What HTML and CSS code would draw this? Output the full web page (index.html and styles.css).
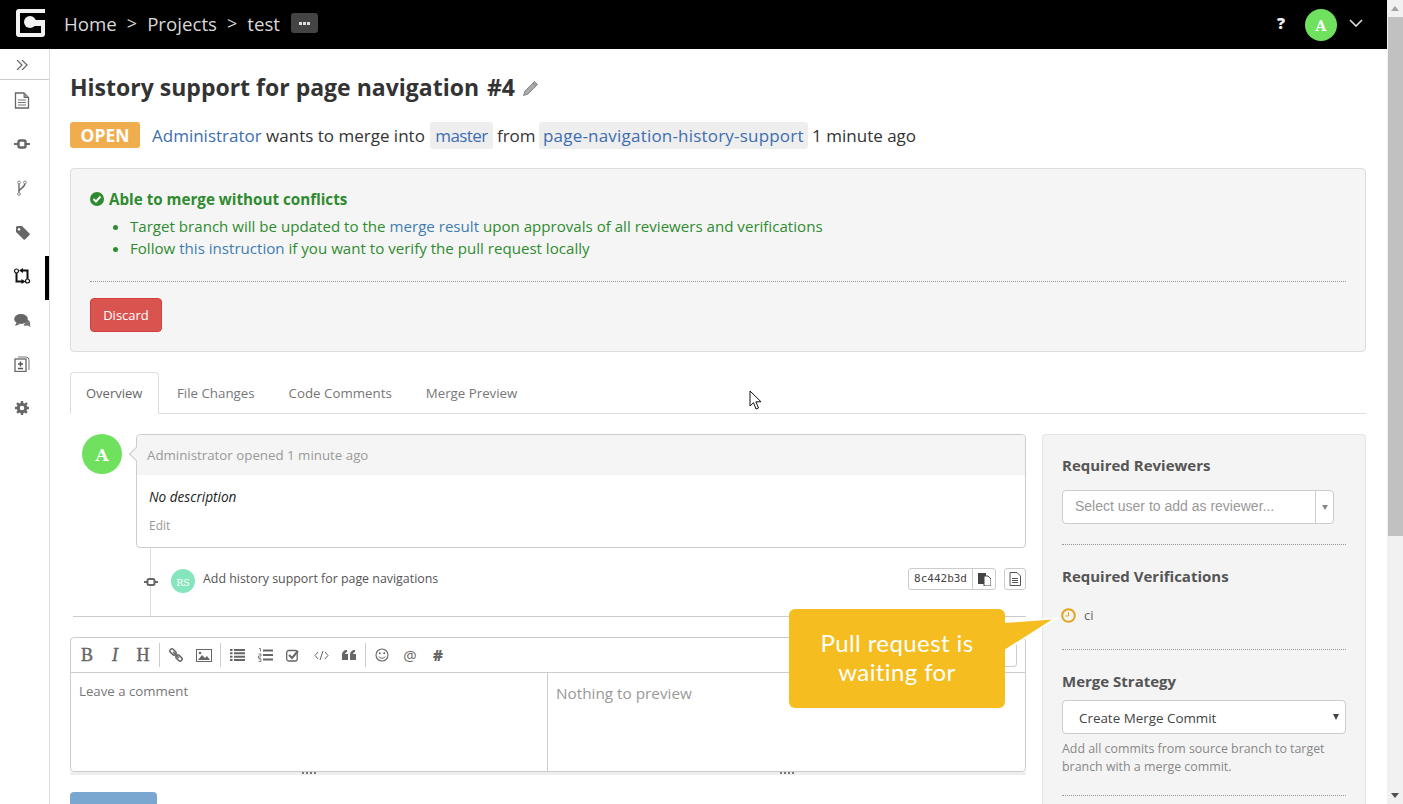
FILE: index.html
```html
<!DOCTYPE html>
<html lang="en">
<head>
<meta charset="utf-8">
<title>History support for page navigation #4</title>
<link rel="stylesheet" href="styles.css">
</head>
<body>
<div class="viewport">
  <div class="app">
    <header class="topbar">
      <svg class="logo" width="30" height="30" viewBox="0 0 30 30"><path d="M4 1H30V5H5V25H26V18H17V12H30V26a3 3 0 0 1-3 3H4a3 3 0 0 1-3-3V4a3 3 0 0 1 3-3z" fill="#f2f2f2"/><circle cx="15" cy="14" r="6" fill="#f2f2f2"/></svg>
      <nav class="crumbs"><span>Home</span><span class="sep">&gt;</span><span>Projects</span><span class="sep">&gt;</span><span>test</span><span class="more"><i></i><i></i><i></i></span></nav>
      <span class="help">?</span>
      <span class="avatar small">A</span>
      <svg class="chev" width="14" height="8" viewBox="0 0 14 8"><path d="M1 1l6 6 6-6" fill="none" stroke="#ddd" stroke-width="1.6"/></svg>
    </header>
    <div class="body">
      <aside class="sidebar">
        <div class="collapse"><svg width="12" height="10" viewBox="0 0 12 10"><path d="M1 0l5 5-5 5M6 0l5 5-5 5" fill="none" stroke="#666" stroke-width="1.2"/></svg></div>
        <ul class="menu">
          <li><svg width="16" height="17" viewBox="0 0 16 17"><path d="M1.500 1h8.500l4.500 4.500V16H1.500z" fill="none" stroke="#666" stroke-width="1.300"/><path d="M10 1v4.500h4.500" fill="#999" stroke="#666"/><path d="M4 8h8M4 10.500h8M4 13h8" stroke="#777" stroke-width="1.200"/></svg></li>
          <li><svg width="16" height="10" viewBox="0 0 16 10"><path d="M0 5h4M12 5h4" stroke="#666" stroke-width="2"/><rect x="4.500" y="1.500" width="7" height="7" rx="1.500" fill="#fff" stroke="#666" stroke-width="2.400"/></svg></li>
          <li><svg width="14" height="16" viewBox="0 0 14 16"><path d="M4 14V3M4 11c1-3 6-3 6-8" fill="none" stroke="#666" stroke-width="1.400"/><circle cx="4" cy="2.500" r="1.400" fill="#fff" stroke="#888"/><circle cx="10" cy="2.500" r="1.400" fill="#fff" stroke="#888"/><circle cx="4" cy="14" r="1.400" fill="#fff" stroke="#888"/></svg></li>
          <li><svg width="15" height="15" viewBox="0 0 15 15"><path d="M1 2.500Q1 1 2.500 1H7l7.500 7.500a1 1 0 0 1 0 1.400L10 14.500a1 1 0 0 1-1.400 0L1 7zM4 3a1.300 1.300 0 1 0 .01 0z" fill="#666" fill-rule="evenodd"/></svg></li>
          <li class="active"><svg width="16" height="16" viewBox="0 0 16 16"><path d="M2.500 5v8.500h6M13.500 11V2.500H8" fill="none" stroke="#111" stroke-width="2"/><path d="M9 0L5 2.500 9 5zM7.500 11l4 2.500-4 2.500z" fill="#111"/><circle cx="2.500" cy="3" r="2" fill="#fff" stroke="#111" stroke-width="1.200"/><circle cx="13.500" cy="13" r="2" fill="#fff" stroke="#111" stroke-width="1.200"/></svg></li>
          <li><svg width="17" height="15" viewBox="0 0 17 15"><path d="M13.500 6.500c2 1 3 3 2.500 4.500l.5 3-3-1.500c-1.500.5-3 .3-4-.3" fill="#777"/><ellipse cx="7" cy="6" rx="6.800" ry="5" fill="#666"/><path d="M2.500 9.500L1 13l5-2z" fill="#666"/></svg></li>
          <li><svg width="16" height="16" viewBox="0 0 16 16"><path d="M4 1h8q3 0 3 3v10" fill="none" stroke="#777"/><rect x="1" y="3" width="11" height="12.500" fill="none" stroke="#666" stroke-width="1.300"/><path d="M6.500 5.500v5M4 8h5M4 12.500h5" stroke="#555" stroke-width="1.500"/></svg></li>
          <li><svg width="16" height="16" viewBox="0 0 16 16"><circle cx="8" cy="8" r="3.800" fill="none" stroke="#666" stroke-width="3"/><path d="M8 1v14M1 8h14M3 3l10 10M13 3L3 13" stroke="#666" stroke-width="2.400" stroke-dasharray="2.600 8.800"/></svg></li>
        </ul>
      </aside>
      <main class="main">
        <h1 class="title">History support for page navigation<span>#4</span><svg class="pencil" width="17" height="17" viewBox="0 0 17 17"><path d="M12.500 1.500l3 3L6 14l-4.500 1.500L3 11zM11 3l3 3" fill="#aaa" stroke="#888" stroke-width="1"/></svg></h1>
        <div class="status">
          <span class="badge">OPEN</span>
          <span class="status-text"><a>Administrator</a> wants to merge into <a class="ref master">master</a> from <a class="ref branch">page-navigation-history-support</a> 1 minute ago</span>
        </div>
        <section class="merge">
          <div class="ok"><svg width="14" height="14" viewBox="0 0 14 14"><circle cx="7" cy="7" r="7" fill="#2f8b2f"/><path d="M3.500 7l2.500 2.500 4.500-5" fill="none" stroke="#f5f5f5" stroke-width="2"/></svg>Able to merge without conflicts</div>
          <ul class="notes">
            <li>Target branch will be updated to the <a>merge result</a> upon approvals of all reviewers and verifications</li>
            <li>Follow <a>this instruction</a> if you want to verify the pull request locally</li>
          </ul>
          <hr class="dots">
          <button class="discard">Discard</button>
        </section>
        <nav class="tabs"><span class="tab on">Overview</span><span class="tab">File Changes</span><span class="tab">Code Comments</span><span class="tab">Merge Preview</span></nav>
        <div class="columns">
          <div class="activity">
            <div class="opened">
              <span class="avatar big">A</span>
              <article class="card">
                <div class="card-head"><span class="card-tip"></span>Administrator opened 1 minute ago</div>
                <div class="card-body"><em>No description</em><span class="edit">Edit</span></div>
              </article>
            </div>
            <div class="commit">
              <svg class="commit-ico" width="16" height="10" viewBox="0 0 16 10"><path d="M1 5h3M12 5h3" stroke="#666" stroke-width="2"/><rect x="4.500" y="2" width="7" height="6" rx="1.500" fill="#fff" stroke="#666" stroke-width="2"/></svg>
              <span class="avatar rs">RS</span>
              <span class="commit-msg">Add history support for page navigations</span>
              <span class="hash"><code>8c442b3d</code><span class="hash-btn"><svg width="13" height="14" viewBox="0 0 13 14"><rect x="0" y="1" width="8" height="11" fill="#444"/><path d="M6 4h4l3 3v7H6z" fill="#fff" stroke="#444"/></svg></span></span>
              <span class="file-btn"><svg width="12" height="14" viewBox="0 0 12 14"><path d="M1 .5h7l3.500 3.500v9.500H1zM3 6.500h6M3 8.500h6M3 10.500h6" fill="none" stroke="#555"/></svg></span>
            </div>
            <div class="editor">
              <div class="toolbar">
                <b class="tb serif">B</b><b class="tb serif it">I</b><b class="tb serif">H</b><span class="tb-sep"></span>
                <span class="tb"><svg width="14" height="14" viewBox="0 0 14 14"><path d="M4 4l6 6" stroke="#666" stroke-width="1.600"/><rect x="0.500" y="2" width="7" height="4" rx="2" transform="rotate(45 4 4)" fill="none" stroke="#666" stroke-width="1.500"/><rect x="6.500" y="8" width="7" height="4" rx="2" transform="rotate(45 10 10)" fill="none" stroke="#666" stroke-width="1.500"/></svg></span>
                <span class="tb"><svg width="16" height="13" viewBox="0 0 16 13"><rect x=".5" y=".5" width="15" height="12" fill="#fff" stroke="#666"/><path d="M2 11l4-5 3 3 2-2 3 4z" fill="#666"/><circle cx="4" cy="4" r="1.300" fill="#666"/></svg></span><span class="tb-sep"></span>
                <span class="tb"><svg width="15" height="12" viewBox="0 0 15 12"><path d="M0 1h2.500M4 1h11M0 4.300h2.500M4 4.300h11M0 7.700h2.500M4 7.700h11M0 11h2.500M4 11h11" stroke="#666" stroke-width="2"/></svg></span>
                <span class="tb"><svg width="15" height="14" viewBox="0 0 15 14"><path d="M5 2.500h10M5 7h10M5 11.500h10" stroke="#666" stroke-width="2"/><path d="M1 .5h1.500v3M.5 6h2.500v2H.5v2H3M.5 11h2.500v2.500H.5" fill="none" stroke="#666" stroke-width=".8"/></svg></span>
                <span class="tb"><svg width="14" height="13" viewBox="0 0 14 13"><rect x=".7" y="1.500" width="10.500" height="10.500" rx="2" fill="none" stroke="#666" stroke-width="1.300"/><path d="M3 6l3 3 6-7" fill="none" stroke="#666" stroke-width="2"/></svg></span>
                <span class="tb"><svg width="15" height="11" viewBox="0 0 15 11"><path d="M4 2L1 5.500 4 9M11 2l3 3.500L11 9M9 1L6 10" fill="none" stroke="#666"/></svg></span>
                <span class="tb"><svg width="14" height="11" viewBox="0 0 14 11"><path d="M0 5c0-3 2-5 5-5v2c-1 0-2 1-2 2h3v6H0zM8 5c0-3 2-5 5-5v2c-1 0-2 1-2 2h3v6H8z" fill="#666"/></svg></span><span class="tb-sep"></span>
                <span class="tb"><svg width="14" height="14" viewBox="0 0 14 14"><circle cx="7" cy="7" r="6" fill="none" stroke="#666" stroke-width="1.100"/><circle cx="4.800" cy="5.200" r="1" fill="#666"/><circle cx="9.200" cy="5.200" r="1" fill="#666"/><path d="M3.800 8.500c1.500 2.300 5 2.300 6.400 0" fill="none" stroke="#666"/></svg></span>
                <span class="tb glyph">@</span>
                <span class="tb glyph hash-glyph">#</span>
                <span class="tb-end"></span>
              </div>
              <div class="panes">
                <div class="pane left">Leave a comment</div>
                <div class="pane right">Nothing to preview</div>
              </div>
            </div>
            <div class="resize"><span class="grip"></span><span class="grip"></span></div>
            <div class="submit"></div>
          </div>
          <aside class="side">
            <h2>Required Reviewers</h2>
            <div class="picker"><span>Select user to add as reviewer...</span><i class="picker-arrow"></i></div>
            <hr class="dots">
            <h2>Required Verifications</h2>
            <div class="ci"><svg width="15" height="15" viewBox="0 0 15 15"><circle cx="7.500" cy="7.500" r="6.300" fill="none" stroke="#dfa51c" stroke-width="2"/><path d="M7.500 4v4H4.500" fill="none" stroke="#dfa51c"/></svg>ci</div>
            <hr class="dots dots-ci">
            <h2>Merge Strategy</h2>
            <div class="select">Create Merge Commit<i></i></div>
            <p class="hint">Add all commits from source branch to target branch with a merge commit.</p>
            <hr class="dots">
          </aside>
        </div>
      </main>
    </div>
  </div>
  <div class="scrollbar"><i class="up"></i><span class="thumb"></span><i class="down"></i></div>
</div>
<svg class="callout-tail" width="60" height="50" viewBox="0 0 60 50"><path d="M0 13L56 7 0 42z" fill="#fff"/><path d="M0 13L48 9.500 0 40z" fill="#f5bd20"/></svg>
<div class="callout">Pull request is<br>waiting for</div>
<svg class="cursor" width="14" height="21" viewBox="0 0 14 21"><path d="M1 1v15l3.500-3.300 2.500 6.300 2.500-1-2.600-6.200H12z" fill="#fff" stroke="#111"/></svg>
</body>
</html>
```
FILE: styles.css
```css
* { box-sizing: border-box; }
html, body { margin: 0; height: 100%; overflow: hidden; }
body { font-family: "Open Sans", "Noto Sans", sans-serif; font-size: 14px; color: #333; background: #fff; }
a { color: #3d6db0; }
.viewport { display: flex; height: 804px; }
.app { flex: 1; min-width: 0; display: flex; flex-direction: column; }

.scrollbar { width: 16px; background: #f1f1f1; display: flex; flex-direction: column; align-items: center; position: relative; }
.scrollbar .thumb { width: 15px; height: 519px; background: #c1c1c1; margin-top: 17px; }
.scrollbar i { position: absolute; width: 0; height: 0; border-left: 4px solid transparent; border-right: 4px solid transparent; }
.scrollbar .up { top: 6px; border-bottom: 5px solid #a3a3a3; }
.scrollbar .down { bottom: 6px; border-top: 5px solid #505050; }

.topbar { height: 49px; flex: none; background: #000; display: flex; align-items: center; padding: 0 24px 0 15px; color: #ddd; }
.logo { flex: none; margin-bottom: 3px; }
.crumbs { display: flex; align-items: center; margin-left: 19px; margin-bottom: 3px; font-size: 18.700px; color: #d8d8d8; flex: 1; }
.crumbs .sep { margin: 0 10px; font-size: 18px; }
.more { margin-left: 11px; width: 27px; height: 20px; background: #444; border-radius: 3px; display: flex; align-items: center; justify-content: center; gap: 1px; }
.more i { width: 3px; height: 3px; background: #ddd; }
.help { font-weight: 800; font-size: 16px; color: #eee; margin-right: 20px; margin-bottom: 4px; }
.avatar { display: inline-flex; align-items: center; justify-content: center; border-radius: 50%; color: #fff; font-family: "DejaVu Serif", serif; font-weight: 700; flex: none; background: #70e05f; }
.avatar.small { width: 32px; height: 32px; font-size: 14px; margin-right: 12px; padding-top: 2px; }
.chev { flex: none; margin-bottom: 3px; }

.body { flex: 1; display: flex; min-height: 0; }
.sidebar { width: 50px; flex: none; border-right: 1px solid #ddd; }
.collapse { height: 31px; padding-right: 5px; padding-top: 1px; display: flex; align-items: center; justify-content: center; border-bottom: 1px solid #ccc; }
.menu { list-style: none; margin: 0; padding: 0; }
.menu li { height: 44px; padding-bottom: 4px; display: flex; align-items: center; justify-content: center; position: relative; margin-right: 5px; }
.menu li.active::after { content: ""; position: absolute; right: -5px; top: 0; width: 4px; height: 44px; background: #000; }

.main { flex: 1; min-width: 0; padding: 19px 21px 0 20px; overflow: hidden; }
.title { margin: 0; font-size: 23px; line-height: 38px; font-weight: 700; color: #333; display: flex; align-items: center; white-space: pre; }
.title span { margin-left: 8px; }
.pencil { margin-left: 7px; margin-top: 3px; }
.status { display: flex; align-items: center; margin-top: 16px; font-size: 17px; line-height: 26px; color: #333; white-space: nowrap; }
.status-text { position: relative; top: 1px; }
.status a { color: #3d6db0; }
.badge { width: 70px; height: 26px; background: #f0ad4e; color: #fff; font-weight: 700; font-size: 17.500px; border-radius: 3px; text-align: center; margin-right: 12px; }
.ref { background: #eee; padding: 2px 5px; border-radius: 3px; }
.master { letter-spacing: -.6px; margin-left: 1px; }
.branch { letter-spacing: .2px; margin-left: -1px; padding: 2px 4px; }

.merge { margin-top: 20px; height: 184px; background: #f5f5f5; border: 1px solid #ddd; border-radius: 4px; padding: 19px; color: #2f8b2f; font-size: 15.100px; }
.ok { font-weight: 700; display: flex; align-items: center; gap: 5px; line-height: 22px; color: #2f8b2f; font-size: 15.200px; }
.notes { margin: 5px 0 0; padding: 0 0 0 40px; line-height: 22px; }
.notes a { color: #3d7cb0; }
.dots { border: 0; border-top: 1px dotted #999; margin: 22px 0 16px; }
.discard { display: block; width: 72px; height: 34px; background: #d9534f; color: #fff; border: 1px solid #d43f3a; border-radius: 4px; font: 13px "Open Sans", sans-serif; padding: 0; }

.tabs { display: flex; margin-top: 20px; height: 42px; border-bottom: 1px solid #ddd; font-size: 13.300px; color: #777; }
.tab { padding: 0 17px; line-height: 42px; }
.tab.on { border: 1px solid #ddd; border-bottom-color: #fff; height: 42px; border-radius: 4px 4px 0 0; padding: 0 15px; margin-right: 1px; width: 89px; line-height: 40px; color: #666; background: #fff; font-size: 13px; }

.columns { display: flex; gap: 16px; margin-top: 20px; }
.activity { width: 956px; flex: none; position: relative; }
.opened { display: flex; padding-left: 12px; gap: 14px; }
.avatar.big { width: 40px; height: 40px; font-size: 17px; padding-top: 2px; }
.card { flex: 1; height: 114px; border: 1px solid #ccc; border-radius: 4px; position: relative; font-size: 13.300px; }
.card-head { height: 40px; background: #f5f5f5; color: #999; line-height: 40px; padding-left: 10px; border-radius: 4px 4px 0 0; }
.card-tip { position: absolute; left: -6px; top: 14px; width: 10px; height: 10px; background: #f5f5f5; border-left: 1px solid #ccc; border-bottom: 1px solid #ccc; transform: rotate(45deg); }
.card-body { padding: 13px 12px 0; display: flex; flex-direction: column; gap: 11px; line-height: 18px; color: #222; font-size: 13.600px; }
.edit { color: #999; font-size: 12px; }

.commit { height: 69px; margin-left: 3px; border-bottom: 1px solid #ccc; display: flex; align-items: center; font-size: 12.400px; color: #555; position: relative; }
.commit::before { content: ""; position: absolute; left: 77px; top: 0; bottom: 0; width: 1px; background: #ddd; }
.commit-ico { margin-left: 70px; position: relative; flex: none; }
.avatar.rs { width: 24px; height: 24px; background: #85e6bd; font-size: 9.500px; margin-left: 12px; margin-right: 8px; font-weight: 400; padding-top: 2px; position: relative; top: -1px; }
.commit-msg { flex: 1; position: relative; top: -4px; }
.hash { display: flex; height: 22px; border: 1px solid #ccc; border-radius: 3px; align-items: stretch; position: relative; top: -3px; }
.hash code { font: 11px "DejaVu Sans Mono", monospace; padding: 0 5px; line-height: 20px; color: #444; }
.hash-btn { width: 23px; border-left: 1px solid #ccc; display: flex; align-items: center; justify-content: center; }
.file-btn { width: 22px; height: 22px; margin-left: 8px; border: 1px solid #ccc; border-radius: 3px; display: flex; align-items: center; justify-content: center; position: relative; top: -3px; }

.editor { margin-top: 20px; height: 135px; border: 1px solid #ccc; border-radius: 4px; }
.toolbar { height: 35px; border-bottom: 1px solid #ccc; display: flex; align-items: center; padding-left: 2px; color: #666; }
.tb { width: 28px; display: flex; align-items: center; justify-content: center; flex: none; }
.serif { font: 400 18px "Liberation Serif", serif; color: #666; -webkit-text-stroke: .4px #666; }
.it { font-style: italic; }
.tb-sep { width: 1px; height: 24px; background: #ccc; margin: 0 2px; flex: none; }
.glyph { font-size: 15px; }
.hash-glyph { font-weight: 800; }
.tb-end { margin-left: auto; margin-right: 8px; width: 30px; height: 24px; border: 1px solid #ccc; border-radius: 3px; flex: none; }
.panes { display: flex; height: 98px; }
.pane { padding: 9px 8px; font-size: 13.250px; color: #777; }
.pane.left { width: 477px; border-right: 1px solid #ccc; }
.pane.right { padding-top: 10px; font-size: 15.300px; color: #999; }
.resize { height: 3px; background: #eee; display: flex; }
.grip { width: 14px; height: 3px; position: absolute; left: 232px; border-top: 2px dotted #777; }
.grip + .grip { left: 710px; }
.submit { width: 87px; height: 40px; margin-top: 17px; background: #7aa7d0; border-radius: 4px 4px 0 0; }

.side { width: 324px; flex: none; height: 400px; background: #f4f4f4; border: 1px solid #e5e5e5; border-radius: 4px; padding: 19px; }
.side h2 { margin: 0; font-size: 15px; line-height: 24px; font-weight: 700; color: #555; position: relative; top: -1px; }
.picker { margin-top: 12px; width: 272px; height: 34px; background: #fff; border: 1px solid #ccc; border-radius: 4px; position: relative; font: 14px/30px "Liberation Sans", sans-serif; color: #999; padding-left: 12px; }
.picker-arrow { position: absolute; right: 0; top: 0; height: 32px; width: 18px; border-left: 1px solid #ccc; }
.picker-arrow::after { content: ""; position: absolute; left: 6px; top: 14px; border-left: 3px solid transparent; border-right: 3px solid transparent; border-top: 5px solid #888; }
.side .dots { margin: 20px 0; }
.ci { display: flex; align-items: center; gap: 8px; margin-top: 13px; height: 26px; font-size: 13px; color: #666; margin-left: -1px; }
.side .dots-ci { margin-top: 21px; }
.select { margin-top: 6px; height: 34px; background: #fff; border: 1px solid #ccc; border-radius: 4px; font-size: 13.400px; line-height: 34px; color: #444; padding-left: 16px; position: relative; }
.select i { position: absolute; right: 6px; top: 13px; border-left: 3px solid transparent; border-right: 3px solid transparent; border-top: 6px solid #444; }
.hint { margin: 6px 0 0; font-size: 12.400px; line-height: 18px; color: #888; }
.side .hint + .dots { margin-top: 19px; }

.callout { position: absolute; left: 789px; top: 609px; width: 216px; height: 99px; background: #f5bd20; border-radius: 6px; color: #fff; font: 24px/29px "Lato", sans-serif; text-align: center; padding-top: 19px; letter-spacing: .4px; }
.callout-tail { position: absolute; left: 1004px; top: 610px; }
.cursor { position: absolute; left: 749px; top: 390px; }
```
